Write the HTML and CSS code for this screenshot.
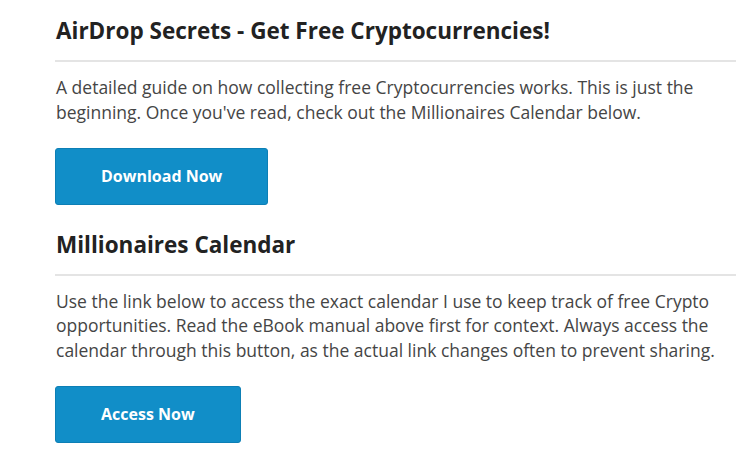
FILE: index.html
```html
<!DOCTYPE html>
<html lang="en">
<head>
<meta charset="utf-8">
<title>AirDrop Secrets</title>
<link rel="stylesheet" href="styles.css">
</head>
<body>
<main class="page">
  <section class="block">
    <h2 class="title">AirDrop Secrets - Get Free Cryptocurrencies!</h2>
    <p class="text">A detailed guide on how collecting free Cryptocurrencies works. This is just the beginning. Once you've read, check out the Millionaires Calendar below.</p>
    <a class="btn" href="#">Download Now</a>
  </section>
  <section class="block">
    <h2 class="title">Millionaires Calendar</h2>
    <p class="text">Use the link below to access the exact calendar I use to keep track of free Crypto opportunities. Read the eBook manual above first for context. Always access the calendar through this button, as the actual link changes often to prevent sharing.</p>
    <a class="btn" href="#">Access Now</a>
  </section>
</main>
</body>
</html>
```
FILE: styles.css
```css
html, body {
  margin: 0;
  padding: 0;
  background: #ffffff;
}
body {
  font-family: "Open Sans", "Liberation Sans", sans-serif;
}
.page {
  width: 681px;
  padding: 15px 0 0 55px;
}
.block {
  display: flex;
  flex-direction: column;
  align-items: flex-start;
}
.block + .block {
  margin-top: 24px;
}
.title {
  align-self: stretch;
  margin: 0;
  padding: 0 0 13px 1px;
  font-size: 22.5px;
  line-height: 32px;
  font-weight: 700;
  color: #222222;
  border-bottom: 2px solid #e4e4e4;
}
.text {
  margin: 13px 0 0 0;
  padding-left: 1px;
  font-size: 17.5px;
  line-height: 24.5px;
  color: #454545;
}
.btn {
  margin-top: 23.5px;
  display: block;
  padding: 16px 45px;
  font-size: 16px;
  line-height: 23px;
  font-weight: 700;
  color: #ffffff;
  text-decoration: none;
  background: #118ec8;
  border: 1px solid #0d7fb5;
  border-radius: 3px;
}
```
